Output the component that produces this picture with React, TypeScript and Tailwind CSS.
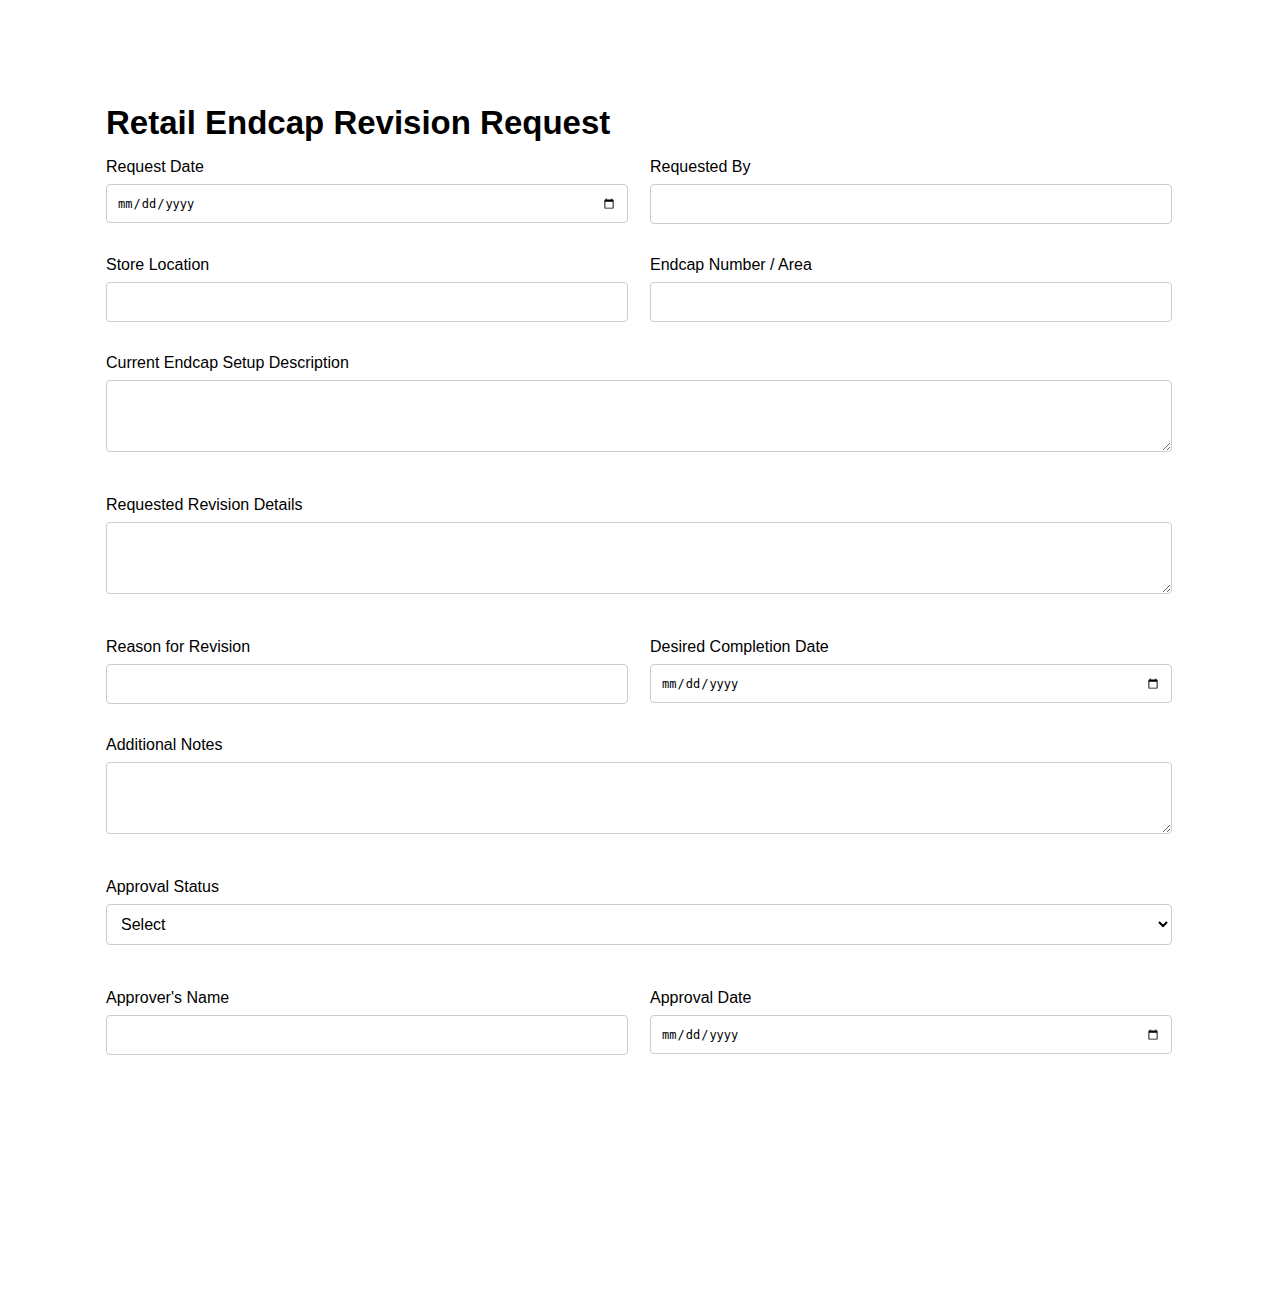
import React from "react";

const labelCls = "block text-[16px] leading-[18px] pt-[1px] mb-[8px] text-black";
const textCls =
  "block w-full h-[40px] border border-[#cccccc] rounded-[4px] px-[10px] text-[16px] bg-white outline-none";
const dateCls =
  "block w-full h-[39px] border border-[#cccccc] rounded-[4px] px-[10px] pt-[1px] text-[12px] bg-white text-black font-['DejaVu_Sans_Mono',monospace] outline-none";
const areaCls =
  "block w-full h-[72px] border border-[#cccccc] rounded-[4px] p-[10px] text-[16px] bg-white outline-none";

function Field({ label, children }: { label: string; children: React.ReactNode }) {
  return (
    <div>
      <label className={labelCls}>{label}</label>
      {children}
    </div>
  );
}

export default function App() {
  return (
    <div className="min-h-[1300px] bg-white font-['Liberation_Sans',Arial,sans-serif] text-black">
      <form className="mx-auto w-[1066px] pt-[105px]">
        <h1 className="text-[33px] leading-[36px] font-bold mb-[16px]">Retail Endcap Revision Request</h1>

        <div className="grid grid-cols-2 gap-x-[22px] mb-[31px]">
          <Field label="Request Date">
            <input type="date" className={dateCls} />
          </Field>
          <Field label="Requested By">
            <input type="text" className={textCls} />
          </Field>
        </div>

        <div className="grid grid-cols-2 gap-x-[22px] mb-[31px]">
          <Field label="Store Location">
            <input type="text" className={textCls} />
          </Field>
          <Field label="Endcap Number / Area">
            <input type="text" className={textCls} />
          </Field>
        </div>

        <div className="mb-[43px]">
          <Field label="Current Endcap Setup Description">
            <textarea className={areaCls} />
          </Field>
        </div>

        <div className="mb-[43px]">
          <Field label="Requested Revision Details">
            <textarea className={areaCls} />
          </Field>
        </div>

        <div className="grid grid-cols-2 gap-x-[22px] mb-[31px]">
          <Field label="Reason for Revision">
            <input type="text" className={textCls} />
          </Field>
          <Field label="Desired Completion Date">
            <input type="date" className={dateCls} />
          </Field>
        </div>

        <div className="mb-[43px]">
          <Field label="Additional Notes">
            <textarea className={areaCls} />
          </Field>
        </div>

        <div className="mb-[43px]">
          <Field label="Approval Status">
            <select
              defaultValue=""
              className="block w-full h-[41px] border border-[#cccccc] rounded-[4px] px-[10px] text-[16px] bg-white text-black outline-none"
            >
              <option value="">Select</option>
              <option value="pending">Pending</option>
              <option value="approved">Approved</option>
              <option value="rejected">Rejected</option>
            </select>
          </Field>
        </div>

        <div className="grid grid-cols-2 gap-x-[22px]">
          <Field label="Approver's Name">
            <input type="text" className={textCls} />
          </Field>
          <Field label="Approval Date">
            <input type="date" className={dateCls} />
          </Field>
        </div>
      </form>
    </div>
  );
}
